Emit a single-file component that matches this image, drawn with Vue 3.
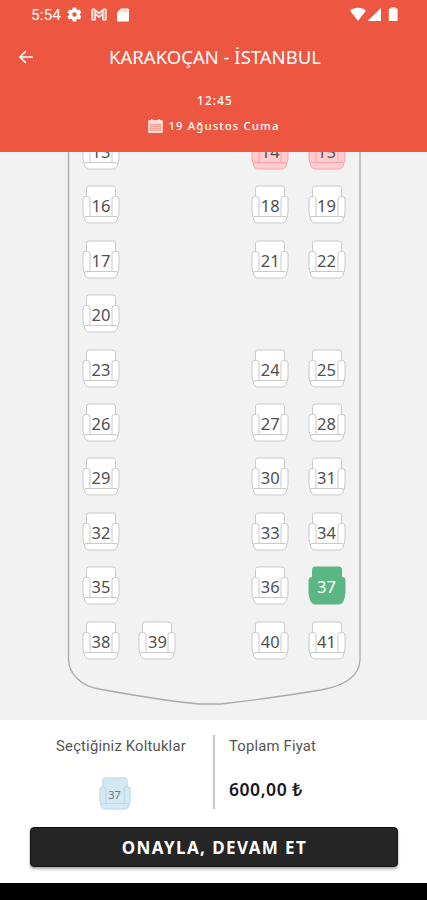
<template>
    <div class="screen">
        <header class="header">
            <div class="status">
                <span class="clock">5:54</span>
                <svg class="gear" viewBox="0 0 24 24" width="17" height="17">
                    <path fill="#fff" fill-rule="evenodd" d="M19.4 13c0-.3.1-.7.1-1s0-.7-.1-1l2.1-1.6c.2-.2.3-.4.1-.6l-2-3.500c-.1-.2-.4-.3-.6-.2l-2.500 1c-.5-.4-1.100-.7-1.700-1l-.4-2.600c0-.3-.2-.5-.5-.5h-4c-.3 0-.5.2-.5.5L9 5.100c-.6.2-1.200.6-1.700 1l-2.500-1c-.2-.1-.5 0-.6.2l-2 3.500c-.1.2-.1.400.1.6L4.500 11c0 .3-.1.7-.1 1s0 .7.1 1l-2.200 1.600c-.2.2-.2.400-.1.6l2 3.500c.1.2.4.3.6.2l2.500-1c.5.4 1.100.7 1.700 1l.4 2.600c0 .3.2.5.5.5h4c.3 0 .5-.2.5-.5l.4-2.600c.6-.2 1.200-.6 1.700-1l2.500 1c.2.1.5 0 .6-.2l2-3.500c.1-.2.1-.4-.1-.6zM12 15.200a3.200 3.200 0 1 1 0-6.400 3.200 3.200 0 0 1 0 6.400z" />
                </svg>
                <svg class="mail" viewBox="0 0 16 13" width="16" height="13">
                    <path fill="#fff" fill-opacity=".35" d="M1 2h3.200v10H1zM11.800 2H15v10h-3.200zM4.200 2 8 4.900 11.800 2v4.300L8 9.200 4.200 6.300z" />
                    <path fill="none" stroke="#fff" stroke-width="1.300" stroke-linejoin="round" d="M1 2.200v9.600h3.200V6.300L8 9.200l3.800-2.900v5.500H15V2.200c0-1.300-1.400-1.600-2.300-.9L8 4.900 3.300 1.300C2.400.6 1 .900 1 2.200zM4.200 2v4.300M11.800 2v4.300" />
                </svg>
                <svg class="card" viewBox="0 0 12 14" width="12" height="14">
                    <path fill="#fff" d="M4 .5h6.700c.7 0 1.300.6 1.300 1.300v10.400c0 .7-.6 1.300-1.300 1.300H1.300C.6 13.500 0 12.900 0 12.200V4.500z" />
                    <path stroke="#ed5640" stroke-width=".8" stroke-opacity=".7" d="M5 1.800v2M7.200 1.800v2M9.400 1.800v2" />
                </svg>
                <svg class="signals" viewBox="0 0 48 15" width="48" height="15">
                    <path fill="#fff" d="M0 3.500C4.500-.3 11.500-.3 16 3.500L8 14zM31 1v13H17.500zM39.800 1.500h1.800V.200h3.800v1.300h1.200c.6 0 1 .4 1 1v10.500c0 .6-.4 1-1 1h-6.800c-.6 0-1-.4-1-1V2.500c0-.6.4-1 1-1z" />
                </svg>
            </div>
            <div class="title-row">
                <svg class="back" viewBox="0 0 16 16" width="16" height="16">
                    <path fill="none" stroke="#fff" stroke-width="1.700" d="M15 8H2M7.800 2.200 2 8 7.800 13.800" />
                </svg>
                <h1>KARAKOÇAN - İSTANBUL</h1>
            </div>
            <div class="time">12:45</div>
            <div class="date">
                <svg viewBox="0 0 15 14" width="15" height="14">
                    <path fill="#fff" fill-opacity=".45" d="M1 4h13v9H1z" />
                    <path fill="none" stroke="#fff" stroke-width="1.300" d="M1 2h13v11H1zM1 3.800h13M3.800 0v3M11.200 0v3" />
                    <path stroke="#fff" stroke-opacity=".5" stroke-width=".7" d="M3 6.500h9M3 8.500h9M3 10.500h9" />
                </svg>
                <span>19 Ağustos Cuma</span>
            </div>
        </header>

        <main class="bus">
            <svg class="hull" viewBox="0 0 427 568" width="427" height="568">
                <path d="M68.500-2V508C69 521 80 534 99 537Q165 549 199 552H221Q265 547 321 538C348 533 360 522 360 507V-2" />
            </svg>
            <div class="seats">
                <div v-for="(row, i) in rows" :key="i" class="row">
                    <div v-for="(no, j) in row" :key="j" class="seat" :class="seatState(no)">
                        <template v-if="no">
                            <svg viewBox="0 0 38 39" width="38" height="39">
                                <path v-for="d in seatParts" :key="d" :d="d" />
                            </svg>
                            <span>{{ no }}</span>
                        </template>
                    </div>
                </div>
            </div>
        </main>

        <footer class="summary">
            <div class="info">
                <div class="chosen">
                    <p>Seçtiğiniz Koltuklar</p>
                    <div class="seat picked">
                        <svg viewBox="0 0 38 39" width="32" height="33">
                            <path v-for="d in seatParts" :key="d" :d="d" />
                        </svg>
                        <span>{{ selected }}</span>
                    </div>
                </div>
                <div class="total">
                    <p>Toplam Fiyat</p>
                    <strong>600,00 ₺</strong>
                </div>
            </div>
            <button>ONAYLA, DEVAM ET</button>
        </footer>
        <div class="navbar"></div>
    </div>
</template>

<script setup>
import { ref } from "vue";

const selected = ref(37);
const taken = [14, 15];

// 0 = no seat in that place
const rows = [
    [13, 0, 0, 14, 15],
    [16, 0, 0, 18, 19],
    [17, 0, 0, 21, 22],
    [20, 0, 0, 0, 0],
    [23, 0, 0, 24, 25],
    [26, 0, 0, 27, 28],
    [29, 0, 0, 30, 31],
    [32, 0, 0, 33, 34],
    [35, 0, 0, 36, 37],
    [38, 39, 0, 40, 41],
];

// back, left arm, right arm, front cushion
const seatParts = [
    "M4.500 33V3.500Q4.500 1 7 1H31Q33.500 1 33.500 3.500V33Z",
    "M3.500 11.500H5.500Q8 11.500 8 14V31.500L3 34.500Q1 31 1 27V14Q1 11.500 3.500 11.500Z",
    "M34.500 11.500H32.500Q30 11.500 30 14V31.500L35 34.500Q37 31 37 27V14Q37 11.500 34.500 11.500Z",
    "M4 31.500H34Q36 31.500 35.500 33.500Q34.500 38 31 38H7Q3.500 38 2.500 33.500Q2 31.500 4 31.500Z",
];

function seatState(no) {
    return {
        taken: taken.includes(no),
        active: no === selected.value,
    };
}
</script>

<style>
body {
    margin: 0;
}
</style>

<style scoped>
.screen {
    display: flex;
    flex-direction: column;
    width: 427px;
    height: 900px;
    overflow: hidden;
    background: #f2f2f2;
    font-family: "Noto Sans", sans-serif;
}

.header {
    height: 152px;
    flex: none;
    color: #fff;
    background: #ed5640;
}

.status {
    display: flex;
    align-items: center;
    height: 29px;
    padding: 0 29px 0 31px;
    font-family: Roboto, sans-serif;
    font-size: 15.5px;
}

.clock {
    width: 29px;
    margin-right: 6px;
    white-space: nowrap;
}

.mail {
    margin-left: 8px;
}

.card {
    margin-left: 10px;
}

.signals {
    margin-left: auto;
}

.title-row {
    display: flex;
    align-items: center;
    height: 56px;
    padding: 0 18px;
}

h1 {
    flex: 1;
    margin: 0 13px 0 0;
    font-size: 18.5px;
    font-weight: 400;
    line-height: 24px;
    text-align: center;
    white-space: nowrap;
}

.time {
    height: 29px;
    padding-left: 3px;
    font-size: 11.7px;
    font-weight: 500;
    line-height: 30px;
    letter-spacing: 1.2px;
    text-align: center;
}

.date {
    display: flex;
    align-items: center;
    justify-content: center;
    gap: 5px;
    height: 23px;
    padding-left: 1px;
    font-size: 11.4px;
    font-weight: 500;
    letter-spacing: 1.1px;
    white-space: nowrap;
}

.bus {
    display: grid;
    flex: none;
    height: 568px;
    overflow: hidden;
}

.hull,
.seats {
    grid-area: 1 / 1;
}

.hull path {
    fill: none;
    stroke: #aaa;
    stroke-width: 1.3;
}

.seats {
    margin: -21px 0 0 82px;
}

.row {
    display: flex;
    gap: 18.4px;
    height: 54.4px;
}

.seat {
    display: grid;
    place-items: center;
    width: 38px;
    height: 39px;
    color: #505050;
    font-size: 16.5px;
}

.seat svg,
.seat span {
    grid-area: 1 / 1;
}

.seat span {
    margin-top: 3px;
    line-height: 20px;
}

.seat path {
    fill: #fff;
    stroke: #c9c9c9;
    stroke-width: 1;
}

.seat.taken path {
    fill: #ffcdd0;
    stroke: #f9a3a8;
}

.seat.active {
    color: #fff;
}

.seat.active path {
    fill: #5ab784;
    stroke: #5ab784;
}

.seat.picked {
    width: 32px;
    height: 33px;
    color: #6b7880;
    font-size: 11px;
}

.seat.picked path {
    fill: #d5e9f3;
    stroke: #add5e5;
}

.summary {
    flex: none;
    height: 163px;
    background: #fff;
}

.info {
    display: flex;
    height: 107px;
    color: #555;
    font-size: 14.8px;
}

.info p {
    margin: 0;
    font-family: Roboto, sans-serif;
    font-weight: 400;
    line-height: 20px;
    letter-spacing: 0.2px;
    white-space: nowrap;
}

.chosen {
    display: flex;
    flex-direction: column;
    align-items: center;
    box-sizing: border-box;
    width: 159px;
    height: 74px;
    margin: 15px 0 0 56px;
    padding: 1px 27px 0 0;
    border-right: 2px solid #c8c8c8;
}

.chosen .seat {
    flex: none;
    margin: 21px 0 0 -13px;
}

.total {
    padding: 16px 0 0 14px;
}

.total strong {
    display: block;
    margin-top: 21px;
    color: #171728;
    font-size: 17.5px;
    font-weight: 600;
    line-height: 24px;
    letter-spacing: 0.55px;
}

button {
    display: block;
    width: 368px;
    height: 40px;
    margin: 0 0 0 30px;
    padding: 1px 0 0 1px;
    border: 1px solid #111;
    border-radius: 4px;
    background: #252525;
    box-shadow: 0 2px 3px rgba(0, 0, 0, 0.35);
    color: #fff;
    font-family: "Noto Sans", sans-serif;
    font-size: 17px;
    font-weight: 700;
    letter-spacing: 1.4px;
}

.navbar {
    flex: 1;
    background: #000;
}
</style>
